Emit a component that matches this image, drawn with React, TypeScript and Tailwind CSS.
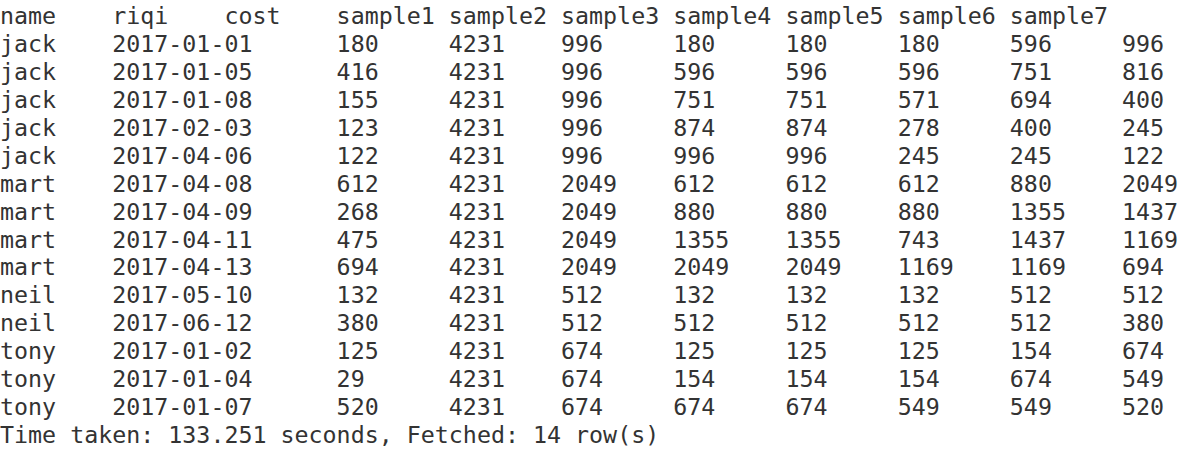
const header = ['name', 'riqi', 'cost', 'sample1', 'sample2', 'sample3', 'sample4', 'sample5', 'sample6', 'sample7'];

const rows: string[][] = [
    ['jack', '2017-01-01', '180', '4231', '996', '180', '180', '180', '596', '996'],
    ['jack', '2017-01-05', '416', '4231', '996', '596', '596', '596', '751', '816'],
    ['jack', '2017-01-08', '155', '4231', '996', '751', '751', '571', '694', '400'],
    ['jack', '2017-02-03', '123', '4231', '996', '874', '874', '278', '400', '245'],
    ['jack', '2017-04-06', '122', '4231', '996', '996', '996', '245', '245', '122'],
    ['mart', '2017-04-08', '612', '4231', '2049', '612', '612', '612', '880', '2049'],
    ['mart', '2017-04-09', '268', '4231', '2049', '880', '880', '880', '1355', '1437'],
    ['mart', '2017-04-11', '475', '4231', '2049', '1355', '1355', '743', '1437', '1169'],
    ['mart', '2017-04-13', '694', '4231', '2049', '2049', '2049', '1169', '1169', '694'],
    ['neil', '2017-05-10', '132', '4231', '512', '132', '132', '132', '512', '512'],
    ['neil', '2017-06-12', '380', '4231', '512', '512', '512', '512', '512', '380'],
    ['tony', '2017-01-02', '125', '4231', '674', '125', '125', '125', '154', '674'],
    ['tony', '2017-01-04', '29', '4231', '674', '154', '154', '154', '674', '549'],
    ['tony', '2017-01-07', '520', '4231', '674', '674', '674', '549', '549', '520'],
];

export default function App() {
    return (
        <div
            className="w-[1195px] h-[450px] bg-white text-[#333333] text-[23.3px] leading-[27.93px] pt-[2px] overflow-hidden whitespace-pre"
            style={{ fontFamily: '"DejaVu Sans Mono", monospace' }}
        >
            {/* header: name / riqi / cost share the first three tab stops */}
            <div className="grid grid-cols-[8ch_8ch_8ch_8ch_8ch_8ch_8ch_8ch_8ch_8ch]">
                {header.map((h, i) => (
                    <span key={i}>{h}</span>
                ))}
            </div>

            {/* data rows: the date pushes cost to column 24 */}
            {rows.map((r, i) => (
                <div key={i} className="grid grid-cols-[8ch_16ch_8ch_8ch_8ch_8ch_8ch_8ch_8ch_8ch]">
                    {r.map((c, j) => (
                        <span key={j}>{c}</span>
                    ))}
                </div>
            ))}

            <div>Time taken: 133.251 seconds, Fetched: 14 row(s)</div>
        </div>
    );
}
